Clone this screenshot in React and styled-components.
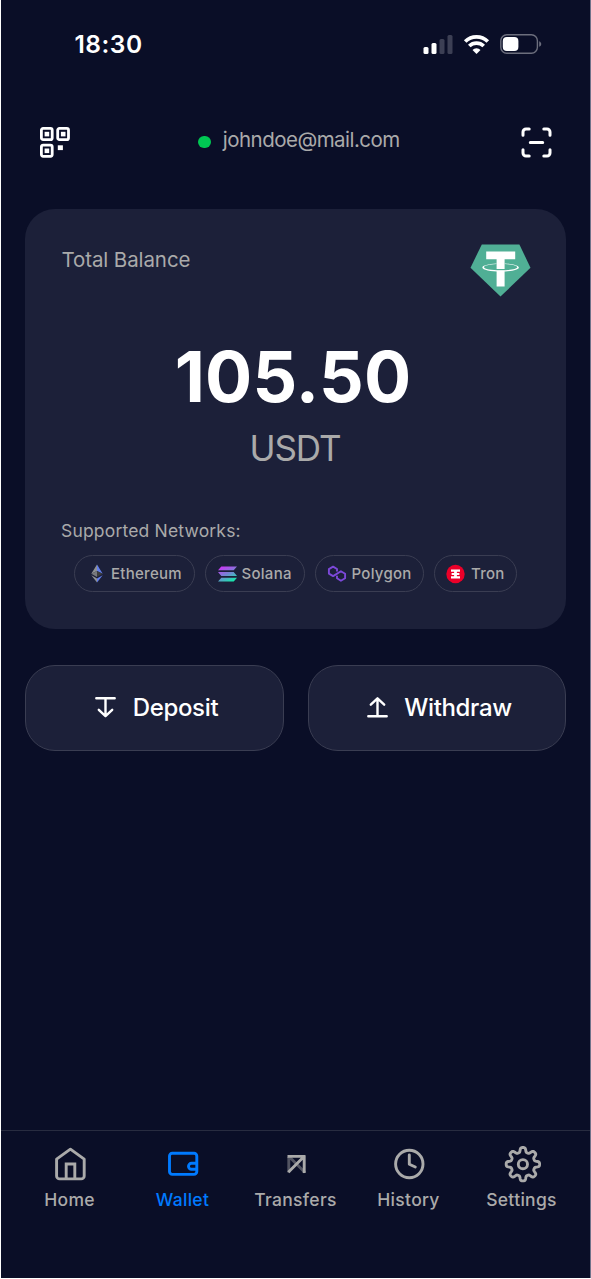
import React from 'react';
import styled, { createGlobalStyle } from 'styled-components';

const COLORS = {
  background: '#0a0e27',
  surface: '#1c2039',
  border: '#3a3d52',
  divider: '#282c40',
  muted: '#aaaaaa',
  active: '#007aff',
  online: '#00c853',
};

const GlobalStyle = createGlobalStyle`
  * {
    box-sizing: border-box;
  }
  body {
    margin: 0;
    background: #ffffff;
    font-family: Inter, 'Liberation Sans', sans-serif;
  }
  svg {
    display: block;
    flex: none;
    overflow: visible;
  }
`;

const Screen = styled.div`
  display: flex;
  flex-direction: column;
  width: 590px;
  height: 1278px;
  margin-left: 1px;
  background: ${COLORS.background};
  border-right: 1px solid #70738a;
`;

const StatusBar = styled.header`
  display: flex;
  justify-content: space-between;
  align-items: center;
  height: 88px;
  padding: 0 48px 0 73.5px;
`;

const Clock = styled.span`
  font-size: 24.5px;
  font-weight: 600;
  letter-spacing: 0.5px;
  color: #ffffff;
`;

const StatusIcons = styled.div`
  display: flex;
  align-items: center;
  gap: 11px;
`;

const AccountBar = styled.div`
  display: flex;
  justify-content: space-between;
  align-items: center;
  height: 109px;
  padding: 0 38px 0 39px;
`;

const Account = styled.div`
  display: flex;
  align-items: center;
  gap: 12px;
  padding-bottom: 6px;
  margin-left: 6px;
`;

const OnlineDot = styled.span`
  width: 12.5px;
  height: 12.5px;
  margin-top: 5px;
  border-radius: 50%;
  background: ${COLORS.online};
`;

const Email = styled.span`
  font-size: 20.5px;
  line-height: 26px;
  letter-spacing: -0.53px;
  color: ${COLORS.muted};
`;

const BalanceCard = styled.section`
  height: 420px;
  margin: 11.5px 24px 0;
  padding: 36px 36px 0;
  border-radius: 30px;
  background: ${COLORS.surface};
`;

const CardHeader = styled.div`
  display: flex;
  justify-content: space-between;
  align-items: flex-start;
  height: 94px;
`;

const CardTitle = styled.h2`
  margin: 2px 0 0 0.5px;
  font-size: 20.5px;
  font-weight: 400;
  line-height: 26px;
  letter-spacing: -0.1px;
  color: ${COLORS.muted};
`;

const Amount = styled.div`
  height: 76px;
  margin-left: -5px;
  font-size: 70px;
  font-weight: 700;
  line-height: 76px;
  letter-spacing: 0.2px;
  text-align: center;
  color: #ffffff;
`;

const Currency = styled.div`
  height: 60px;
  margin-left: -1px;
  font-size: 35px;
  font-weight: 400;
  line-height: 66px;
  letter-spacing: -1.1px;
  text-align: center;
  color: ${COLORS.muted};
`;

const NetworksLabel = styled.div`
  margin-top: 45px;
  font-size: 17.5px;
  line-height: 22px;
  letter-spacing: 0.18px;
  color: ${COLORS.muted};
`;

const Networks = styled.div`
  display: flex;
  gap: 10px;
  margin: 13px 0 0 13px;
`;

const NetworkChip = styled.div`
  display: flex;
  align-items: center;
  gap: ${props => props.$gap}px;
  width: ${props => props.$width}px;
  height: 37px;
  padding-left: ${props => props.$inset}px;
  border: 1.5px solid ${COLORS.border};
  border-radius: 19px;
  font-size: 15px;
  font-weight: 500;
  letter-spacing: 0.28px;
  color: ${COLORS.muted};
`;

const Actions = styled.div`
  display: grid;
  grid-template-columns: 1fr 1fr;
  gap: 24px;
  padding: 0 24px;
  margin-top: 36px;
`;

const ActionButton = styled.button`
  display: flex;
  align-items: center;
  justify-content: center;
  gap: 16.5px;
  height: 86.5px;
  padding: 0 0 1px 5px;
  border: 1.5px solid ${COLORS.border};
  border-radius: 30px;
  background: ${COLORS.surface};
  font-family: inherit;
  font-size: 24px;
  font-weight: 500;
  line-height: 30px;
  letter-spacing: -0.35px;
  color: #ffffff;
`;

const ActionLabel = styled.span`
  padding-top: 2px;
`;

const TabBar = styled.nav`
  display: grid;
  grid-template-columns: repeat(5, 113px);
  justify-content: center;
  height: 148px;
  margin-top: auto;
  border-top: 1px solid ${COLORS.divider};
`;

const Tab = styled.a`
  display: flex;
  flex-direction: column;
  align-items: center;
  gap: 6px;
  padding-top: 15px;
  font-size: 17.5px;
  font-weight: 500;
  line-height: 24px;
  letter-spacing: 0.3px;
  color: ${props => (props.$active ? COLORS.active : COLORS.muted)};
`;

const SignalIcon = () => (
  <svg width="30" height="19" viewBox="0 0 30 19">
    <rect x="0.5" y="12" width="5" height="7" rx="1.5" fill="#fff" />
    <rect x="8.5" y="8" width="5" height="11" rx="1.5" fill="#fff" />
    <rect x="16.5" y="4" width="5" height="15" rx="1.5" fill="#3c3f54" />
    <rect x="24.5" y="0" width="5" height="19" rx="1.5" fill="#3c3f54" />
  </svg>
);

const WifiIcon = () => (
  <svg width="25" height="19" viewBox="0 0 25 19" fill="none" stroke="#fff" strokeWidth="3.7">
    <path d="M1.2 6.5a16.2 16.2 0 0 1 22.6 0" />
    <path d="M5.3 11a10.3 10.3 0 0 1 14.4 0" />
    <path d="M12.5 19 8.5 15a5.6 5.6 0 0 1 8 0z" fill="#fff" stroke="none" />
  </svg>
);

const BatteryIcon = () => (
  <svg width="42" height="20" viewBox="0 0 42 20">
    <rect x="0.8" y="0.8" width="36.6" height="18.4" rx="6" fill="none" stroke="#6c6e7d" strokeWidth="1.4" />
    <rect x="2.8" y="3" width="15.6" height="14" rx="4" fill="#fff" />
    <path d="M39.2 7.2c2.7 1 2.7 4.6 0 5.6z" fill="#6c6e7d" />
  </svg>
);

const QrIcon = () => (
  <svg width="31" height="31" viewBox="0 0 31 31">
    {[[0, 0], [16.3, 0], [0, 16.7]].map(([x, y]) => (
      <g key={`${x}-${y}`} transform={`translate(${x} ${y})`} fill="#fff">
        <rect x="1.4" y="1.4" width="10.8" height="11.2" rx="1.7" fill="none" stroke="#fff" strokeWidth="2.8" />
        <rect x="4.6" y="4.8" width="4.6" height="4.6" />
      </g>
    ))}
    <rect x="17.8" y="18.3" width="5.1" height="4.8" fill="#fff" />
  </svg>
);

const ScanIcon = () => (
  <svg width="31" height="31" viewBox="0 0 31 31" fill="none" stroke="#fff" strokeWidth="3" strokeLinecap="round">
    <path d="M2 8.2V5a3 3 0 0 1 3-3h3.2M22.8 2H26a3 3 0 0 1 3 3v3.2M29 22.8V26a3 3 0 0 1-3 3h-3.2M8.2 29H5a3 3 0 0 1-3-3v-3.2M9.3 15.5h12.4" />
  </svg>
);

const TetherIcon = () => (
  <svg width="60" height="52" viewBox="-0.5 0.5 60 52">
    <path d="M11.3 0h37.6L60 23.2 30 52 0 23.2z" fill="#50af95" />
    <path d="M15.7 7h29v7.8H34.1v9.6a40 40 0 0 1-8 0v-9.6H15.7z" fill="#fff" />
    <path d="M26.1 26.2h8V42h-8z" fill="#fff" />
    <path
      d="M26 18.9c-8 .4-14.2 2-14.2 4 0 2.3 8.2 4.2 18.3 4.2s18.3-1.9 18.3-4.2c0-2-6.2-3.6-14.2-4v.7c7 .4 12.5 1.6 12.5 3.1 0 1.7-7.5 3.1-16.6 3.1s-16.6-1.4-16.6-3.1c0-1.5 5.5-2.7 12.5-3.1z"
      fill="#fff"
    />
  </svg>
);

const EthereumIcon = () => (
  <svg width="12" height="18" viewBox="0 -0.5 12 18">
    <path d="M6 0v6.6L.3 9.3z" fill="#8f9193" />
    <path d="M6 0l5.7 9.3L6 6.6z" fill="#627eea" />
    <path d="M.3 9.3 6 6.6v6z" fill="#77797d" />
    <path d="M11.7 9.3 6 6.6v6z" fill="#3c3c3d" />
    <path d="M.3 10.7 6 14v4z" fill="#8f9193" />
    <path d="M11.7 10.7 6 14v4z" fill="#627eea" />
  </svg>
);

const SolanaIcon = () => (
  <svg width="19" height="15" viewBox="0 -0.5 19 15">
    <defs>
      <linearGradient id="solana" x1="6" y1="0" x2="13" y2="15" gradientUnits="userSpaceOnUse">
        <stop offset="0" stopColor="#c63cf5" />
        <stop offset="0.5" stopColor="#7385d2" />
        <stop offset="1" stopColor="#19e6ad" />
      </linearGradient>
    </defs>
    <path d="M3.3 0H19l-3.3 3.8H0zM0 5.6h15.7L19 9.4H3.3zM3.3 11.2H19L15.7 15H0z" fill="url(#solana)" />
  </svg>
);

const PolygonIcon = () => (
  <svg width="18" height="16" viewBox="0 -0.7 18 16" fill="none" stroke="#7c48d9" strokeWidth="1.9" strokeLinejoin="round">
    <path d="M9 5.8V3.3L5.1.9.9 3.4v4.5l4.2 2.5 7.8-4.8 4.2 2.5v4.4l-4.2 2.5L9 12.6V10" />
  </svg>
);

const TronIcon = () => (
  <svg width="19" height="19" viewBox="0 -0.5 19 19">
    <circle cx="9.5" cy="9.5" r="9.2" fill="#eb0029" />
    <path d="M5 5h9v2.2H5zM5.6 8.5h7.8v1.9H5.6zM5 11.8h9V14H5z" fill="#fff" />
    <path d="M9.5 6v7" stroke="#fff" strokeWidth="2.8" />
  </svg>
);

const DepositIcon = () => (
  <svg width="21" height="21" viewBox="0 0 21 21" fill="none" stroke="#fff" strokeWidth="2.4" strokeLinecap="round" strokeLinejoin="round">
    <path d="M1.3 1.2h18.4M10.5 1.5V19M3.8 12.8l6.7 6.4 6.7-6.4" />
  </svg>
);

const WithdrawIcon = () => (
  <svg width="21" height="21" viewBox="0 0 21 21" fill="none" stroke="#fff" strokeWidth="2.4" strokeLinecap="round" strokeLinejoin="round">
    <path d="M1.3 19.3h18.4M10.5 19V1.5M3.8 7.7l6.7-6.4 6.7 6.4" />
  </svg>
);

const TabIcon = styled.svg`
  width: 36px;
  height: 36px;
  fill: none;
  stroke: currentColor;
  stroke-width: 2.9px;
  stroke-linecap: round;
  stroke-linejoin: round;
`;

const HomeIcon = () => (
  <TabIcon viewBox="0 0 36 36">
    <path d="M4.6 13.2l13.8-10 13.8 10v16.7a3 3 0 0 1-3 3H7.6a3 3 0 0 1-3-3z" />
    <path d="M14.2 32.5V18h8.6v14.5" strokeLinejoin="miter" />
  </TabIcon>
);

const WalletIcon = () => (
  <TabIcon viewBox="0 0 36 36">
    <rect x="4.5" y="7.2" width="27.3" height="21.2" rx="2.8" />
    <path d="M31.5 17.3h-5a3 3 0 0 0 0 6h5" />
  </TabIcon>
);

const Flat = styled.path`
  stroke-linecap: butt;
  opacity: ${props => (props.$faded ? 0.45 : 1)};
`;

const TransfersIcon = () => (
  <TabIcon viewBox="-0.5 0 36 36">
    <Flat $faded d="M10.3 26.5V11M11 11l15.5 15.5" />
    <Flat d="M9 10.4h18M25.7 10v17M9.8 26.2l15.5-15.5" />
  </TabIcon>
);

const HistoryIcon = () => (
  <TabIcon viewBox="0 0 36 36">
    <circle cx="18.3" cy="18" r="13.7" />
    <path d="M18.3 9v9.2l6 2.8" />
  </TabIcon>
);

// eight rounded teeth around the centre
const gearPath = () => {
  const points = [];
  for (let i = 0; i < 240; i += 1) {
    const angle = (i / 240) * Math.PI * 2;
    const wave = Math.tanh(2 * Math.cos(angle * 8)) / Math.tanh(2);
    const radius = 14.4 + 2.3 * wave;
    points.push(`${(18.9 + radius * Math.sin(angle)).toFixed(2)} ${(18.2 - radius * Math.cos(angle)).toFixed(2)}`);
  }
  return `M${points.join('L')}z`;
};

const SettingsIcon = () => (
  <TabIcon viewBox="0 0 36 36">
    <path d={gearPath()} />
    <circle cx="18.9" cy="18.2" r="4.6" />
  </TabIcon>
);

const networks = [
  { name: 'Ethereum', icon: EthereumIcon, width: 121, inset: 15.5, gap: 8.5 },
  { name: 'Solana', icon: SolanaIcon, width: 100, inset: 12, gap: 4.5 },
  { name: 'Polygon', icon: PolygonIcon, width: 109, inset: 12, gap: 5.5 },
  { name: 'Tron', icon: TronIcon, width: 83, inset: 11, gap: 6 },
];

const tabs = [
  { name: 'Home', icon: HomeIcon },
  { name: 'Wallet', icon: WalletIcon, active: true },
  { name: 'Transfers', icon: TransfersIcon },
  { name: 'History', icon: HistoryIcon },
  { name: 'Settings', icon: SettingsIcon },
];

const App = () => (
  <>
    <GlobalStyle />
    <Screen>
      <StatusBar>
        <Clock>18:30</Clock>
        <StatusIcons>
          <SignalIcon />
          <WifiIcon />
          <BatteryIcon />
        </StatusIcons>
      </StatusBar>
      <AccountBar>
        <QrIcon />
        <Account>
          <OnlineDot />
          <Email>johndoe@mail.com</Email>
        </Account>
        <ScanIcon />
      </AccountBar>
      <BalanceCard>
        <CardHeader>
          <CardTitle>Total Balance</CardTitle>
          <TetherIcon />
        </CardHeader>
        <Amount>105.50</Amount>
        <Currency>USDT</Currency>
        <NetworksLabel>Supported Networks:</NetworksLabel>
        <Networks>
          {networks.map(({ name, icon: Icon, width, inset, gap }) => (
            <NetworkChip key={name} $width={width} $inset={inset} $gap={gap}>
              <Icon />
              {name}
            </NetworkChip>
          ))}
        </Networks>
      </BalanceCard>
      <Actions>
        <ActionButton type="button">
          <DepositIcon />
          <ActionLabel>Deposit</ActionLabel>
        </ActionButton>
        <ActionButton type="button">
          <WithdrawIcon />
          <ActionLabel>Withdraw</ActionLabel>
        </ActionButton>
      </Actions>
      <TabBar>
        {tabs.map(({ name, icon: Icon, active }) => (
          <Tab key={name} $active={active}>
            <Icon />
            {name}
          </Tab>
        ))}
      </TabBar>
    </Screen>
  </>
);

export default App;
